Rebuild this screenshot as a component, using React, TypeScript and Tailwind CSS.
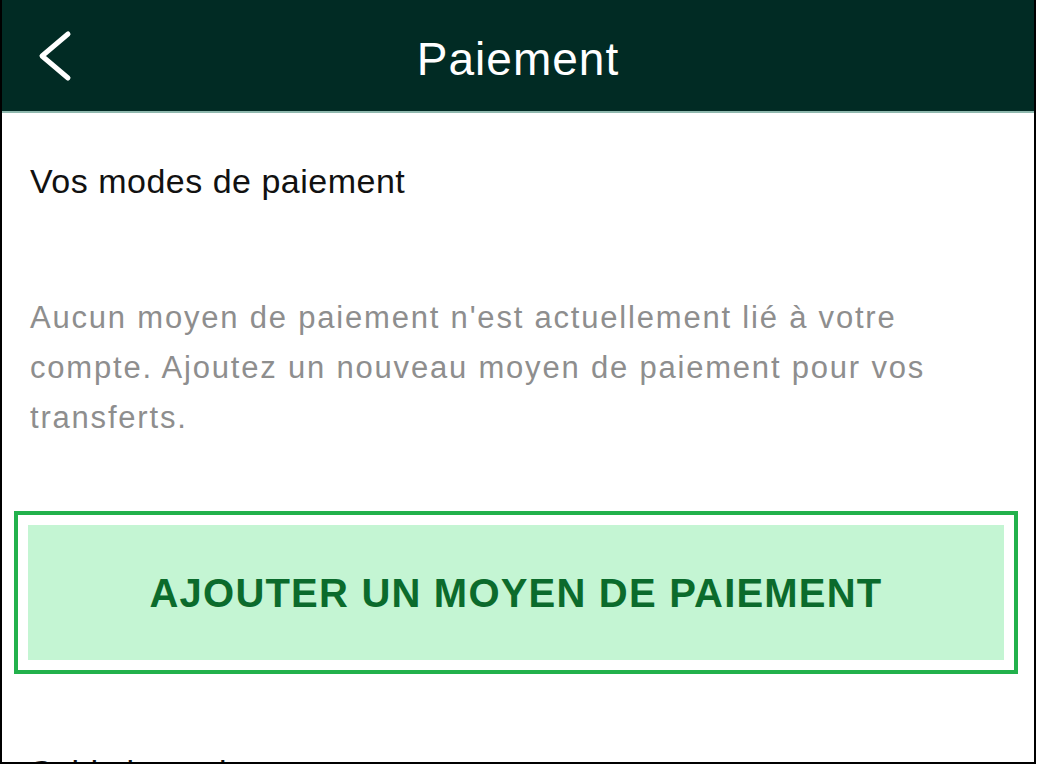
export default function App() {
  return (
    <div
      className="w-[1036px] h-[764px] bg-white border-x-2 border-b-2 border-black overflow-hidden"
      style={{ fontFamily: '"Liberation Sans", Arial, sans-serif' }}
    >
      {/* Header */}
      <div className="relative h-[113px] bg-[#012b24] border-b-2 border-[#8fb8ae] flex items-center justify-center">
        <button className="absolute left-[34px] top-[28px] text-white">
          <svg width="40" height="56" viewBox="0 0 40 56" fill="none">
            <polyline
              points="32,6 6,28 32,50"
              stroke="currentColor"
              strokeWidth="5"
              strokeLinecap="round"
              strokeLinejoin="round"
            />
          </svg>
        </button>
        <h1 className="text-[46px] leading-none text-white tracking-[1px] mt-[6px]">Paiement</h1>
      </div>

      <div className="px-[28px]">
        <h2 className="mt-[48px] text-[34px] leading-[40px] text-[#111] tracking-[0.5px]">
          Vos modes de paiement
        </h2>

        <p className="mt-[92px] w-[930px] text-[31px] leading-[50px] text-[#8e8e8e] tracking-[1.8px]">
          Aucun moyen de paiement n'est actuellement lié à votre compte. Ajoutez un nouveau moyen de
          paiement pour vos transferts.
        </p>
      </div>

      {/* Highlighted button */}
      <div className="mt-[68px] ml-[12px] w-[1004px] border-4 border-[#22b14c] p-[10px]">
        <button className="w-full h-[135px] bg-[#c4f5d3] text-[#0b6b2c] font-bold text-[40px] tracking-[1.2px]">
          AJOUTER UN MOYEN DE PAIEMENT
        </button>
      </div>

      <div className="px-[28px] mt-[78px] text-[34px] leading-[40px] text-[#111]">Solde bancaire</div>
    </div>
  );
}
